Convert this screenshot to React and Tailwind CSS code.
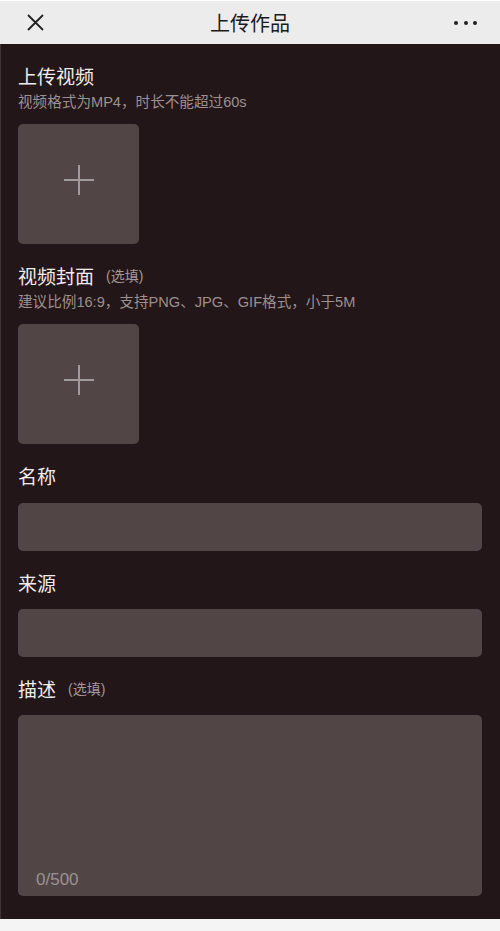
import React from 'react';

const font = { fontFamily: '"Noto Sans CJK SC", "Liberation Sans", sans-serif' };
const hintFont = { fontFamily: '"Liberation Sans", "Noto Sans CJK SC", sans-serif' };

const Plus = () => (
    <svg width="32" height="32" viewBox="0 0 32 32" className="-mt-2">
        <path d="M16 1v30M1 16h30" stroke="#a39a9c" strokeWidth="2" fill="none" />
    </svg>
);

const UploadBox = () => (
    <div className="mt-3 w-[121px] h-[120px] rounded-[5px] bg-[#524546] flex items-center justify-center">
        <Plus />
    </div>
);

const Label = ({ text, optional }) => (
    <div className="flex items-center h-6">
        <span className="text-[19px] leading-6 text-[#f1ecec]">{text}</span>
        {optional && <span className="ml-3 text-[14px] text-[#a39898]" style={hintFont}>(选填)</span>}
    </div>
);

const Hint = ({ children }) => (
    <p className="mt-1 text-[14.6px] leading-5 text-[#9c9090]" style={hintFont}>{children}</p>
);

const App = () => {
    return (
        <div className="w-[500px] h-[931px] flex flex-col bg-[#f4f4f4]" style={font}>
            {/* top bar */}
            <div className="h-11 bg-[#ececec] border-t border-white flex items-center justify-between px-[27px] relative">
                <svg width="17" height="17" viewBox="0 0 17 17">
                    <path d="M1 1l15 15M16 1L1 16" stroke="#222" strokeWidth="1.8" fill="none" />
                </svg>
                <h1 className="absolute left-0 right-0 text-center text-[20px] text-[#1b1b1b] pointer-events-none">上传作品</h1>
                <div className="flex gap-[5.5px] mr-[-4px]">
                    <span className="w-[4px] h-[4px] rounded-full bg-[#222]" />
                    <span className="w-[4px] h-[4px] rounded-full bg-[#222]" />
                    <span className="w-[4px] h-[4px] rounded-full bg-[#222]" />
                </div>
            </div>

            {/* form */}
            <div className="bg-[#231618] border-l border-[#3e3435] pl-[17px] pr-[18px] pt-5 pb-[23px]">
                <Label text="上传视频" />
                <Hint>视频格式为MP4，时长不能超过60s</Hint>
                <UploadBox />

                <div className="mt-5">
                    <Label text="视频封面" optional />
                    <Hint>建议比例16:9，支持PNG、JPG、GIF格式，小于5M</Hint>
                    <UploadBox />
                </div>

                <div className="mt-5">
                    <Label text="名称" />
                    <div className="mt-[15px] h-12 rounded-[5px] bg-[#524546]" />
                </div>

                <div className="mt-5">
                    <Label text="来源" />
                    <div className="mt-[14px] h-12 rounded-[5px] bg-[#524546]" />
                </div>

                <div className="mt-5">
                    <Label text="描述" optional />
                    <div className="mt-[14px] h-[181px] rounded-[5px] bg-[#524546] flex flex-col justify-end pl-[18px] pb-[4px]">
                        <span className="text-[17px] leading-6 text-[#9d9191]" style={{ fontFamily: '"Liberation Sans", sans-serif' }}>0/500</span>
                    </div>
                </div>
            </div>
        </div>
    );
};

export default App;
